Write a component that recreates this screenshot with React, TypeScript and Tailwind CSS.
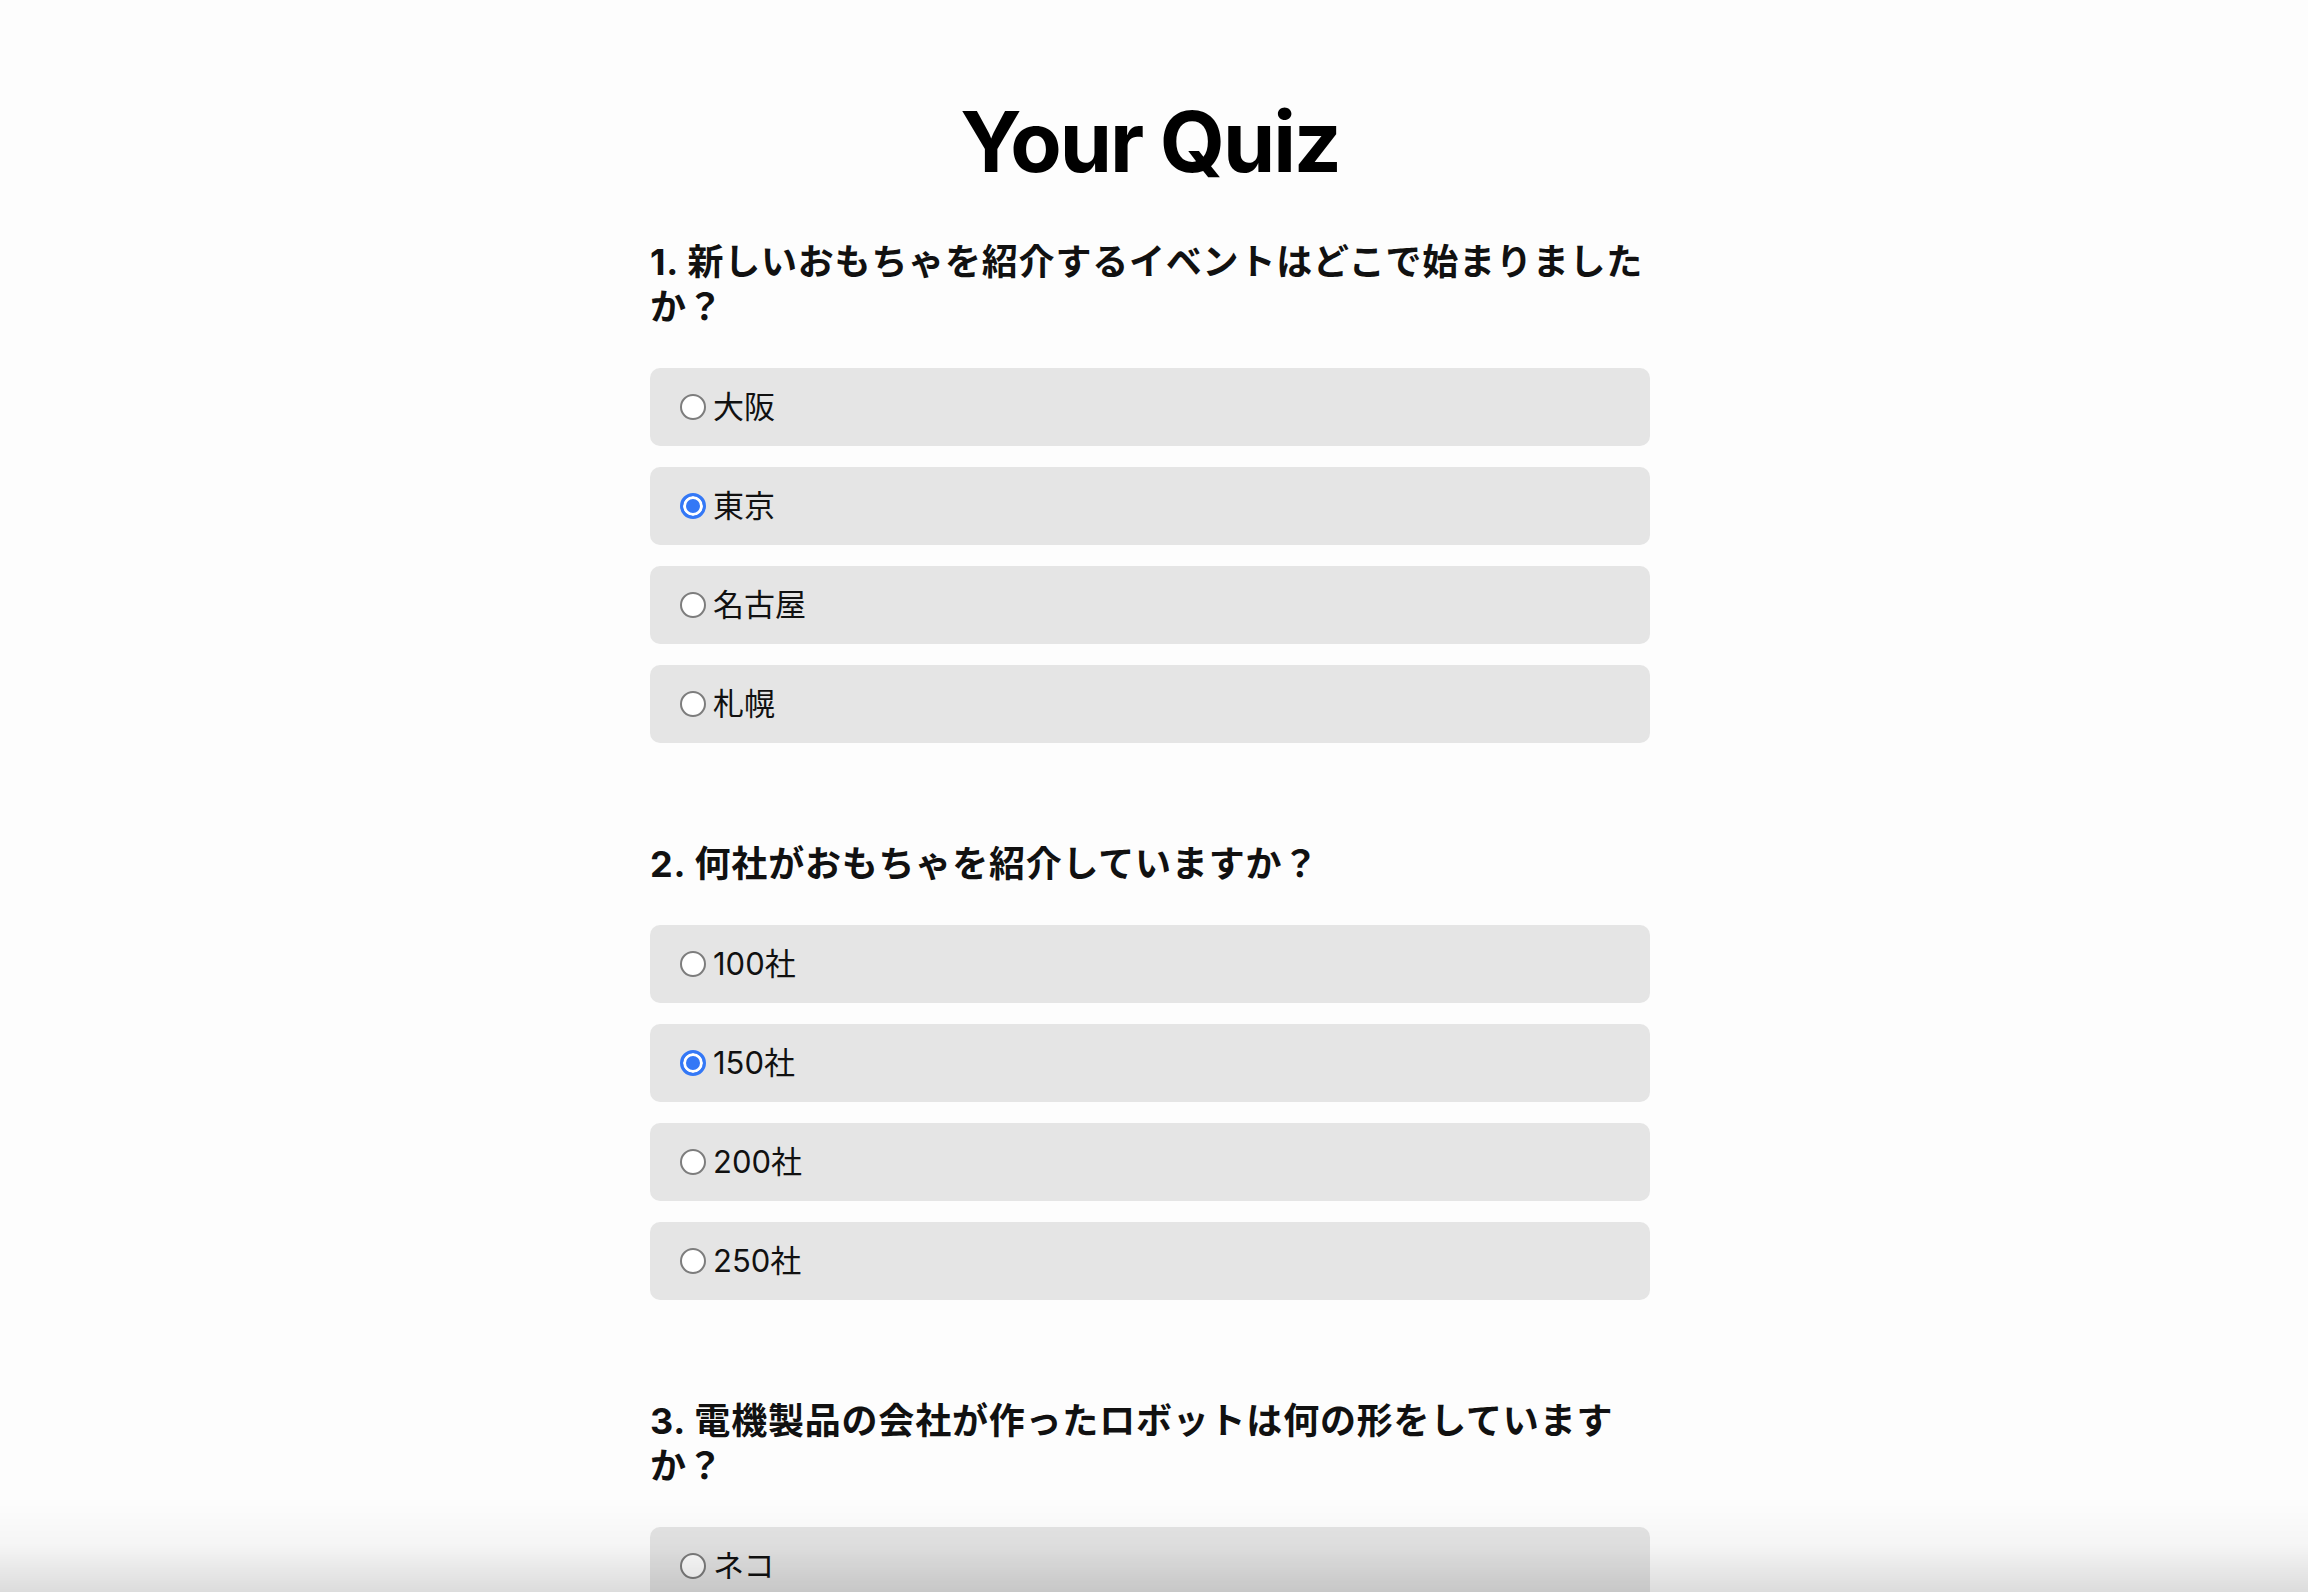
import React from "react";

type Question = {
  id: number;
  text: string;
  options: string[];
  picked?: string;
};

const QUESTIONS: Question[] = [
  {
    id: 1,
    text: "新しいおもちゃを紹介するイベントはどこで始まりましたか？",
    options: ["大阪", "東京", "名古屋", "札幌"],
    picked: "東京",
  },
  {
    id: 2,
    text: "何社がおもちゃを紹介していますか？",
    options: ["100社", "150社", "200社", "250社"],
    picked: "150社",
  },
  {
    id: 3,
    text: "電機製品の会社が作ったロボットは何の形をしていますか？",
    options: ["ネコ", "イヌ", "ウサギ", "クマ"],
  },
];

function Option({ name, label, checked }: { name: string; label: string; checked: boolean }) {
  return (
    <label className="flex h-[78px] cursor-pointer items-center gap-[7px] rounded-[10px] bg-[#e5e5e5] px-[30px]">
      <input
        type="radio"
        name={name}
        value={label}
        defaultChecked={checked}
        className="m-0 h-[26px] w-[26px] shrink-0 appearance-none rounded-full border-2 border-[#7d7d7d] bg-white checked:border-[3px] checked:border-[#3478f6] checked:bg-[#3478f6] checked:shadow-[inset_0_0_0_3px_#ffffff]"
      />
      <span className="text-[31px] leading-[36px] text-[#111]">{label}</span>
    </label>
  );
}

export default function App() {
  return (
    <main className="relative min-h-screen bg-[#fdfdfd] pr-[8px] pt-[100px] pb-[120px] font-['Inter','Noto_Sans_CJK_JP',sans-serif] text-black">
      <h1 className="text-center text-[84px] leading-[84px] font-bold tracking-[-0.025em]">Your Quiz</h1>

      <div className="mx-auto mt-[56px] flex w-[1000px] flex-col gap-[99px]">
        {QUESTIONS.map((q) => (
          <section key={q.id}>
            <h2 className="mb-[38px] text-[36px] leading-[45px] font-bold tracking-[0.8px] text-[#111]">
              {q.id}. {q.text}
            </h2>
            <div className="flex flex-col gap-[21px]">
              {q.options.map((o) => (
                <Option key={o} name={`q${q.id}`} label={o} checked={q.picked === o} />
              ))}
            </div>
          </section>
        ))}
      </div>

      {/* soft shade along the bottom edge of the window */}
      <div
        className="pointer-events-none fixed inset-x-0 bottom-0 h-[95px] bg-gradient-to-b from-transparent via-black/[0.03] to-black/[0.13]"
        aria-hidden
      />
    </main>
  );
}
